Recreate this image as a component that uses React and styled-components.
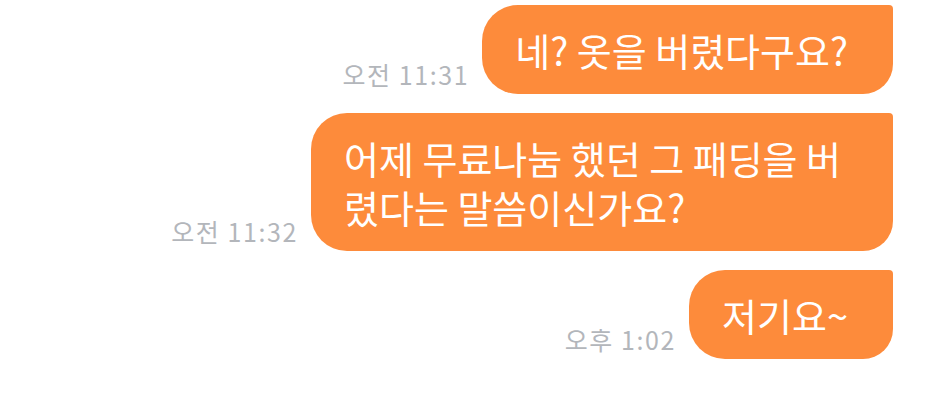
import React from 'react'
import styled, { createGlobalStyle } from 'styled-components'

const GlobalStyle = createGlobalStyle`
    html, body {
        margin: 0;
        padding: 0;
        background: #ffffff;
    }
    body {
        font-family: "Noto Sans CJK KR", "Noto Sans", sans-serif;
    }
`

const messages = [
    { id: 1, time: '오전 11:31', text: '네? 옷을 버렸다구요?' },
    { id: 2, time: '오전 11:32', text: '어제 무료나눔 했던 그 패딩을 버렸다는 말씀이신가요?' },
    { id: 3, time: '오후 1:02', text: '저기요~' },
]

export default function App() {
    return (
        <>
            <GlobalStyle />
            <Chat>
                {messages.map((m) => (
                    <Row key={m.id}>
                        <Time>{m.time}</Time>
                        <Bubble>{m.text}</Bubble>
                    </Row>
                ))}
            </Chat>
        </>
    )
}

const Chat = styled.div`
    display: flex;
    flex-direction: column;
    gap: 19px;
    padding: 5px 45px 0 0;
    width: 938px;
    height: 411px;
    box-sizing: border-box;
`

const Row = styled.div`
    display: flex;
    justify-content: flex-end;
    align-items: flex-end;
    gap: 13px;
`

const Time = styled.span`
    font-family: "Noto Sans CJK KR", sans-serif;
    font-size: 25px;
    line-height: 30px;
    letter-spacing: 1.6px;
    color: #b3b6bb;
    white-space: nowrap;
    margin-bottom: 5px;
`

const Bubble = styled.div`
    box-sizing: border-box;
    max-width: 582px;
    padding: 20px 45px 20px 33px;
    background: #fd8b3b;
    color: #ffffff;
    font-family: "Noto Sans CJK KR", sans-serif;
    font-size: 38px;
    line-height: 49px;
    border-radius: 36px 4px 30px 36px;
`
